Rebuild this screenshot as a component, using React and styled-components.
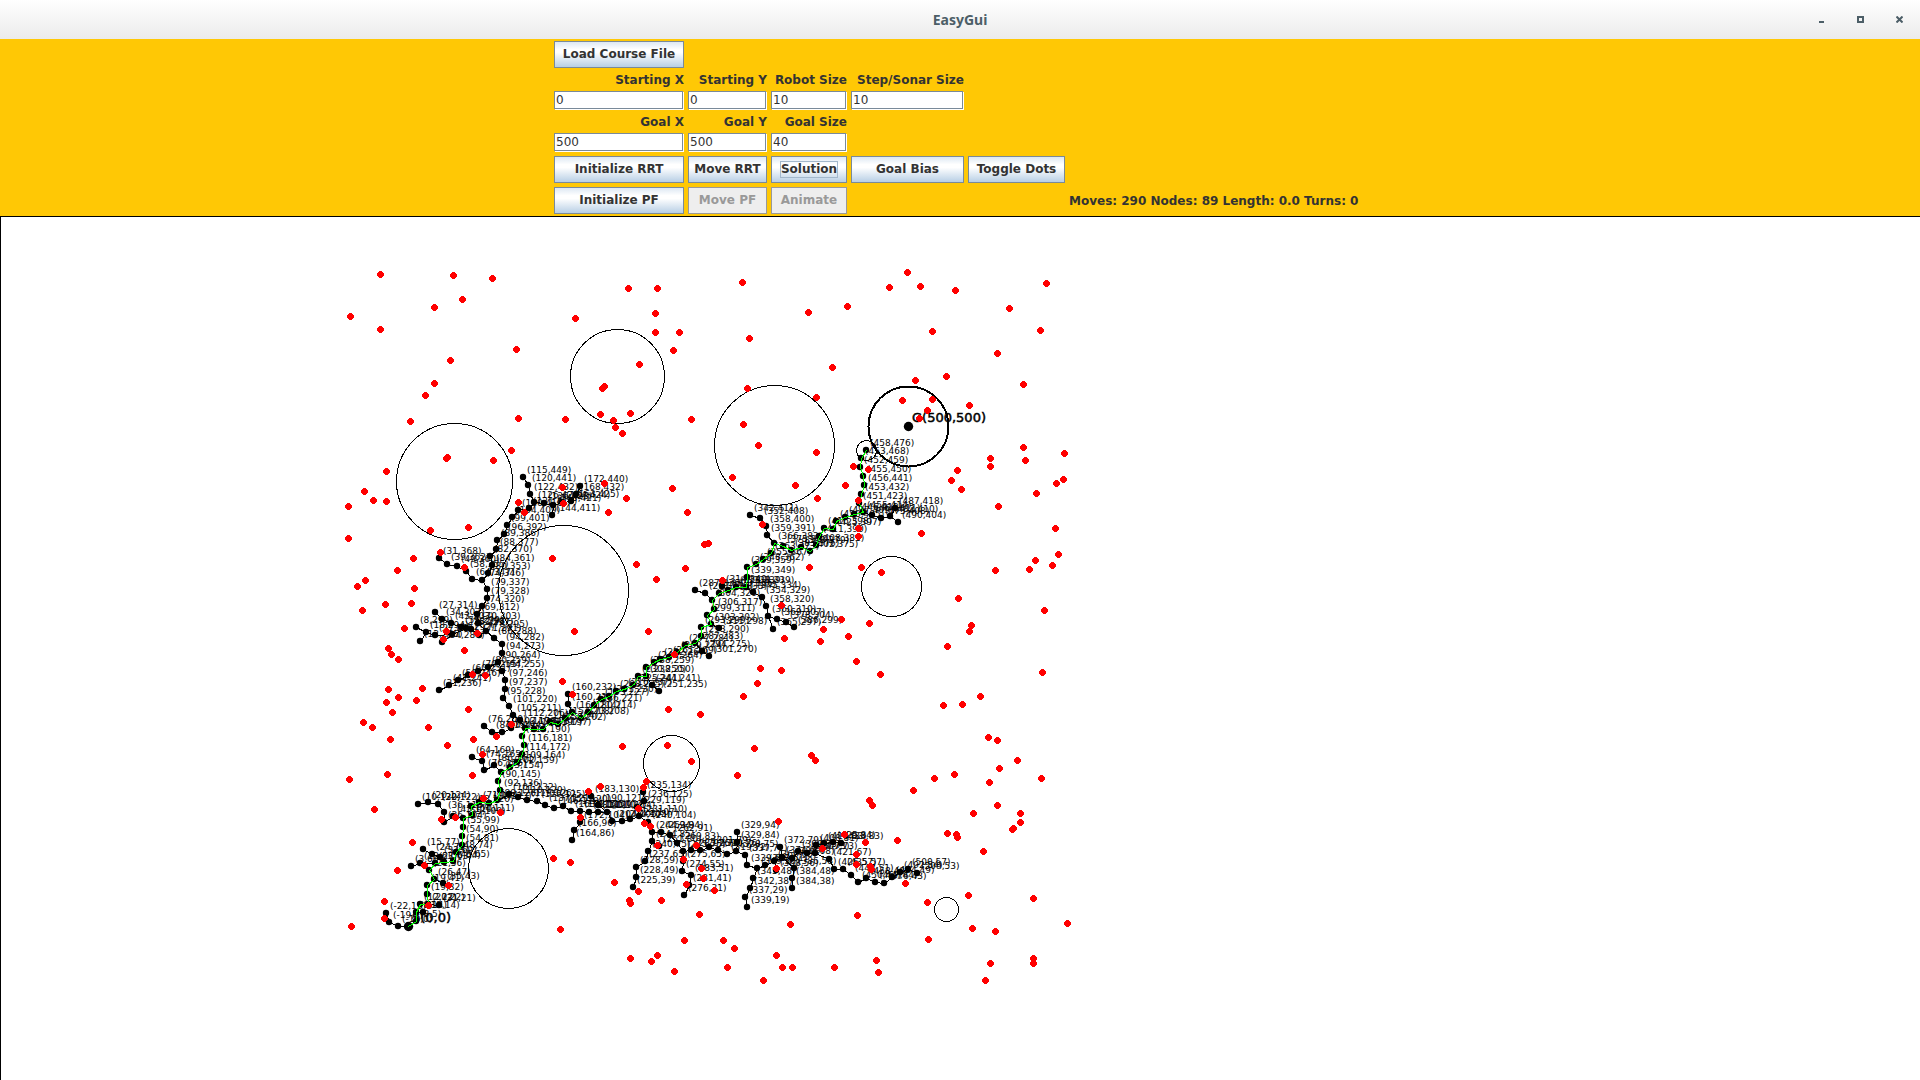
import React from "react";
import styled, { createGlobalStyle, css } from "styled-components";

const GlobalStyle = createGlobalStyle`
  *, *::before, *::after { box-sizing: border-box; }
  body { margin: 0; background: #fff; }
`;

const Window = styled.main`
  display: flex;
  flex-direction: column;
  min-height: 100vh;
  font-family: "DejaVu Sans", sans-serif;
  font-size: 12px;
  color: #333;
`;

const TitleBar = styled.header`
  display: grid;
  grid-template-columns: 1fr auto 1fr;
  align-items: center;
  height: 39px;
  padding: 0 9px;
  background: linear-gradient(#ffffff, #ebebeb);
`;

const Title = styled.h1`
  grid-column: 2;
  margin: 0;
  font: 700 14px/20px "Noto Sans", "Open Sans", sans-serif;
  color: #4c5e67;
`;

const WindowButtons = styled.div`
  display: flex;
  justify-content: flex-end;
  gap: 16px;
`;

const WindowButton = styled.button`
  display: flex;
  align-items: center;
  justify-content: center;
  width: 23px;
  height: 23px;
  padding: 0;
  border: 0;
  background: none;
  color: #4c5e67;
`;

const ControlPanel = styled.form`
  display: grid;
  grid-template-columns: 130px 79px 76px 113px 97px 297px;
  grid-template-rows: 27px 15px 19px 15px 19px 27px 27px;
  gap: 4px;
  justify-content: center;
  padding: 2px 0;
  background: #ffc805;
`;

const at = css`
  grid-column: ${(p) => p.$col};
  grid-row: ${(p) => p.$row};
`;

const PushButton = styled.button`
  ${at}
  display: flex;
  align-items: center;
  justify-content: center;
  padding: 0;
  border: 1px solid #7a8a99;
  background: linear-gradient(#dde8f3, #ffffff 30%, #ffffff 42%, #b8cfe5);
  color: #333;
  font: 700 12px/15px "DejaVu Sans", sans-serif;
  white-space: nowrap;

  &:disabled {
    border-color: #999;
    background: #eee;
    color: #999;
  }
`;

const FocusRing = styled.span`
  outline: 1px solid #a3b8cc;
`;

const FieldLabel = styled.label`
  ${at}
  text-align: right;
  font-weight: 700;
  line-height: 17px;
  white-space: nowrap;
`;

const TextField = styled.input`
  ${at}
  min-width: 0;
  margin: 0 1px 1px 0;
  padding: 1px 1px 0;
  border: 1px solid #7a8a99;
  border-radius: 0;
  box-shadow: 1px 1px 0 #fff;
  background: #fff;
  color: #333;
  font: 12px/15px "DejaVu Sans", sans-serif;
`;

const Status = styled.output`
  ${at}
  font-weight: 700;
  line-height: 29px;
  white-space: nowrap;
`;

const Course = styled.section`
  display: flex;
  flex: 1;
  border: solid #000;
  border-width: 1px 0 0 1px;
  background: #fff;
`;

const Plot = styled.svg`
  flex: 1;
  min-width: 0;
  min-height: 863px;
  font-family: "DejaVu Sans", sans-serif;
`;

const FIELDS = [
  { id: "startX", label: "Starting X", value: "0", col: 1, row: 2 },
  { id: "startY", label: "Starting Y", value: "0", col: 2, row: 2 },
  { id: "robotSize", label: "Robot Size", value: "10", col: 3, row: 2 },
  { id: "stepSize", label: "Step/Sonar Size", value: "10", col: 4, row: 2 },
  { id: "goalX", label: "Goal X", value: "500", col: 1, row: 4 },
  { id: "goalY", label: "Goal Y", value: "500", col: 2, row: 4 },
  { id: "goalSize", label: "Goal Size", value: "40", col: 3, row: 4 },
];

const BUTTONS = [
  { text: "Load Course File", col: 1, row: 1 },
  { text: "Initialize RRT", col: 1, row: 6 },
  { text: "Move RRT", col: 2, row: 6 },
  { text: "Solution", col: 3, row: 6, focused: true },
  { text: "Goal Bias", col: 4, row: 6 },
  { text: "Toggle Dots", col: 5, row: 6 },
  { text: "Initialize PF", col: 1, row: 7 },
  { text: "Move PF", col: 2, row: 7, disabled: true },
  { text: "Animate", col: 3, row: 7, disabled: true },
];

// Screen position of the course origin inside the plot; y grows upwards.
const ORIGIN = { x: 407, y: 709 };
const px = (x) => ORIGIN.x + x;
const py = (y) => ORIGIN.y - y;

const parse = (s) => s.trim().split(/\s+/).map((p) => p.split(",").map(Number));

const SOLUTION = parse(`0,0 8,5 8,14 12,22 20,22 19,32 19,41 26,47 21,56 27,63 36,64 45,65 48,74
 54,81 54,90 55,99 55,108 64,111 63,120 71,124 81,123 89,126 92,136 90,145 93,154 102,159 109,164
 114,172 116,181 114,190 117,198 126,197 135,197 142,204 150,202 157,208 164,214 173,208 180,214
 186,221 193,227 201,230 208,235 216,237 225,241 230,250 238,250 238,259 246,264 252,267 261,269
 269,274 277,281 287,283 293,290 293,299 303,302 299,311 306,317 304,326 311,333 320,336 328,339
 338,339 339,349 339,359 348,362 355,367 363,373 366,383 375,380 383,376 393,379 402,375 408,381
 411,390 416,398 425,397 428,405 437,409 446,412 455,414 451,423 453,432 456,441 455,450 452,459
 453,468 458,476`);

// Each branch starts at the node it grew from.
const BRANCHES = [
  "117,198 112,206 105,211 101,220 95,228 97,237 97,246 94,255 90,264 94,273 94,282 86,288 78,295 70,303 69,312 74,320 79,328 79,337 74,346 80,353 84,361 82,370 88,377 89,386 96,392 99,401 104,409 110,416 121,418 126,424 122,432 120,441 115,449",
  "126,424 136,423 145,421 154,424 163,425 168,432 172,440",
  "145,421 144,411",
  "74,346 64,347 58,355 49,360 39,362 31,368",
  "78,295 71,291 63,297 53,299 43,303 34,307 27,314",
  "63,297 58,298 44,292 34,284",
  "44,292 27,291 18,294 8,299",
  "18,294 12,285",
  "90,264 80,259 70,255 60,251 50,246 41,241 31,236",
  "105,211 103,198 94,194 84,194 76,200",
  "93,154 86,161 76,156 74,165 64,169",
  "55,108 45,110 36,104 36,114 30,122 20,124 10,122",
  "89,126 101,132 110,129 119,126 129,125 137,121 146,118 155,120 163,115 172,115 181,114 190,114 199,114",
  "172,115 172,104 166,96 164,86",
  "199,114 190,121 183,130",
  "199,114 204,105 214,105 222,107 231,110 229,119 236,125 235,134",
  "231,110 240,104 244,94 253,94 262,91 269,83 275,75 283,76 292,76 301,79 310,76 319,72 328,75 337,71 339,61 349,58 345,48 342,38 337,29 339,19",
  "244,94 244,85 240,75 237,65 228,59 228,49 225,39",
  "244,85 251,80",
  "328,75 329,84 329,94",
  "275,75 275,65 274,55 283,51 281,41 276,31",
  "349,58 357,61 366,65 374,69 384,68 390,75 399,73 407,73 408,81 416,83 425,84 433,83",
  "374,69 372,79",
  "374,69 386,58 384,48 384,38",
  "366,65 368,56",
  "407,73 421,67 426,57 435,57 443,51 450,44 458,48 467,44 476,43 484,49 492,54 500,57 509,53",
  "366,383 359,391 358,400 352,408 342,411",
  "455,414 464,411 473,408 482,410 490,404",
  "482,410 487,418",
  "304,326 297,333 287,336",
  "320,336 314,340",
  "338,339 345,334 354,329 358,320 360,310 369,307 378,304 386,299",
  "360,310 365,297",
  "303,302 311,298",
  "287,283 294,275 301,270",
  "238,250 244,241 251,235",
  "164,214 160,222 160,232",
  "36,64 32,69 24,72 15,77",
  "27,63 12,63 3,60",
  "26,47 35,43",
  "20,22 31,21",
  "8,14 15,14",
  "0,0 -10,0 -19,4 -22,13",
].map(parse);

const NODES = [...SOLUTION.slice(1), ...BRANCHES.flatMap((b) => b.slice(1))];

// Randomly sampled points, in window pixels.
const SAMPLES = parse(`380,274 453,275 492,278 462,299 434,307 350,316 380,329 516,349 450,360 434,383
 425,395 410,421 518,418 565,419 575,318 628,288 657,288 655,313 655,332 679,332 673,350 639,364
 602,388 604,386 600,414 613,420 630,413 615,427 622,433 691,419 511,450 493,460 446,458 447,457
 386,471 732,477 672,488 742,282 749,338 808,312 847,306 889,287 907,272 920,286 955,290 1046,283
 1009,308 1040,330 932,331 997,353 832,367 946,376 915,380 747,388 816,397 902,400 932,399 1023,384
 969,405 927,410 919,418 743,424 758,445 816,452 795,485 817,498 845,485 853,466 868,469 858,500
 1023,447 990,458 990,466 1025,460 1064,453 957,470 951,480 961,489 1056,483 1063,479 1036,493
 998,506 1055,528 762,524 858,528 364,491 373,500 386,501 348,506 348,538 430,530 468,527 440,552
 413,558 397,570 464,567 365,580 357,586 414,588 385,604 411,603 362,610 404,628 446,631 443,639
 477,633 388,648 391,654 398,659 464,650 472,674 485,675 388,689 422,688 562,487 604,483 626,498
 563,503 518,502 524,512 608,512 552,558 636,564 656,579 574,631 648,631 562,681 572,694 386,702
 398,697 416,700 392,712 468,709 363,722 372,727 428,727 390,739 447,745 473,739 496,736 511,724
 482,754 472,775 387,774 349,779 374,809 483,798 500,812 441,819 455,817 412,842 397,870 424,865
 448,885 384,901 384,918 428,905 351,926 553,858 570,862 614,882 560,929 622,746 588,791 600,786
 580,817 646,781 643,787 638,808 644,823 650,826 657,845 638,891 629,900 630,903 856,661 760,668
 781,670 757,683 743,696 668,709 700,714 667,745 691,761 754,748 811,755 815,760 737,775 869,800
 872,805 778,821 844,834 865,842 856,854 856,864 870,866 871,869 822,848 696,845 683,859 701,868
 703,878 686,884 714,890 661,900 699,914 790,924 857,915 776,868 880,674 687,512 704,544 708,543
 685,568 722,580 809,567 861,567 881,572 921,533 858,536 958,598 781,605 841,619 869,623 784,638
 823,629 820,641 848,636 971,625 969,631 947,646 674,654 943,705 962,704 913,790 934,778 954,774
 973,813 947,833 956,834 957,837 983,851 897,840 905,883 927,902 968,895 972,928 1058,554 1052,565
 1035,560 1029,569 995,570 1044,610 1042,672 980,696 988,737 997,740 1017,760 999,768 989,782
 1041,778 997,805 1020,813 1020,822 1012,829 1013,828 1033,898 1067,923 995,931 1033,958 1033,963
 990,963 985,980 928,939 630,958 651,961 657,955 674,971 684,940 723,940 734,948 776,955 727,967
 782,967 792,967 834,967 763,980 878,972 876,960`);

const OBSTACLES = [
  [617, 376, 47], [454, 481, 58], [563, 590, 65], [774, 445, 60],
  [891, 586, 30], [671, 763, 28], [508, 868, 40], [946, 909, 12],
];

const points = (list) => list.map(([x, y]) => `${px(x) + 0.5},${py(y) + 0.5}`).join(" ");

function CoursePlot() {
  return (
    <Plot role="img" aria-label="Course with the search tree from start to goal">
      <g transform="translate(-0.5 -216.5)" fill="none" stroke="#000" shapeRendering="crispEdges">
        {OBSTACLES.map(([x, y, r]) => (
          <circle key={`${x}-${y}`} cx={x} cy={y} r={r} />
        ))}
        <circle cx={908} cy={426} r={40} strokeWidth={2} />
        <circle cx={866} cy={450} r={10} />
      </g>
      <g fill="none" stroke="#000" shapeRendering="crispEdges">
        {BRANCHES.map((b, i) => (
          <polyline key={i} points={points(b)} />
        ))}
      </g>
      <g>
        {NODES.map(([x, y], i) => (
          <circle key={i} cx={px(x)} cy={py(y)} r={3.2} />
        ))}
        <circle cx={px(0) + 0.5} cy={py(0) + 0.5} r={4.7} />
        <circle cx={px(500) + 0.5} cy={py(500) + 0.5} r={4.7} />
      </g>
      <g fontSize="9">
        {NODES.map(([x, y], i) => (
          <text key={i} x={px(x) + 4} y={py(y) - 4}>{`(${x},${y})`}</text>
        ))}
      </g>
      <g fontSize="13" stroke="#000" strokeWidth="0.5">
        <text x={px(0) + 4} y={py(0) - 4}>S(0,0)</text>
        <text x={px(500) + 4} y={py(500) - 4}>G(500,500)</text>
      </g>
      <polyline points={points(SOLUTION)} fill="none" stroke="#00ff00" shapeRendering="crispEdges" />
      <g transform="translate(-0.5 -216.5)" fill="#ff0000" shapeRendering="crispEdges">
        {SAMPLES.map(([x, y], i) => (
          <circle key={i} cx={x} cy={y} r={3.4} />
        ))}
      </g>
    </Plot>
  );
}

export default function App() {
  return (
    <Window>
      <GlobalStyle />
      <TitleBar>
        <Title>EasyGui</Title>
        <WindowButtons>
          <WindowButton type="button" aria-label="Minimize">
            <svg width="7" height="7" fill="currentColor"><path d="M1 5h5v2H1z" /></svg>
          </WindowButton>
          <WindowButton type="button" aria-label="Maximize">
            <svg width="7" height="7" fill="none" stroke="currentColor" strokeWidth="2"><path d="M1 1h5v5H1z" /></svg>
          </WindowButton>
          <WindowButton type="button" aria-label="Close">
            <svg width="7" height="7" fill="none" stroke="currentColor" strokeWidth="2"><path d="M.5.5l6 6M6.5.5l-6 6" /></svg>
          </WindowButton>
        </WindowButtons>
      </TitleBar>
      <ControlPanel onSubmit={(e) => e.preventDefault()}>
        {FIELDS.map((f) => (
          <React.Fragment key={f.id}>
            <FieldLabel htmlFor={f.id} $col={f.col} $row={f.row}>{f.label}</FieldLabel>
            <TextField id={f.id} type="text" defaultValue={f.value} $col={f.col} $row={f.row + 1} />
          </React.Fragment>
        ))}
        {BUTTONS.map((b) => (
          <PushButton key={b.text} type="button" disabled={b.disabled} $col={b.col} $row={b.row}>
            {b.focused ? <FocusRing>{b.text}</FocusRing> : b.text}
          </PushButton>
        ))}
        <Status $col={6} $row={7}>Moves: 290 Nodes: 89 Length: 0.0 Turns: 0</Status>
      </ControlPanel>
      <Course>
        <CoursePlot />
      </Course>
    </Window>
  );
}
